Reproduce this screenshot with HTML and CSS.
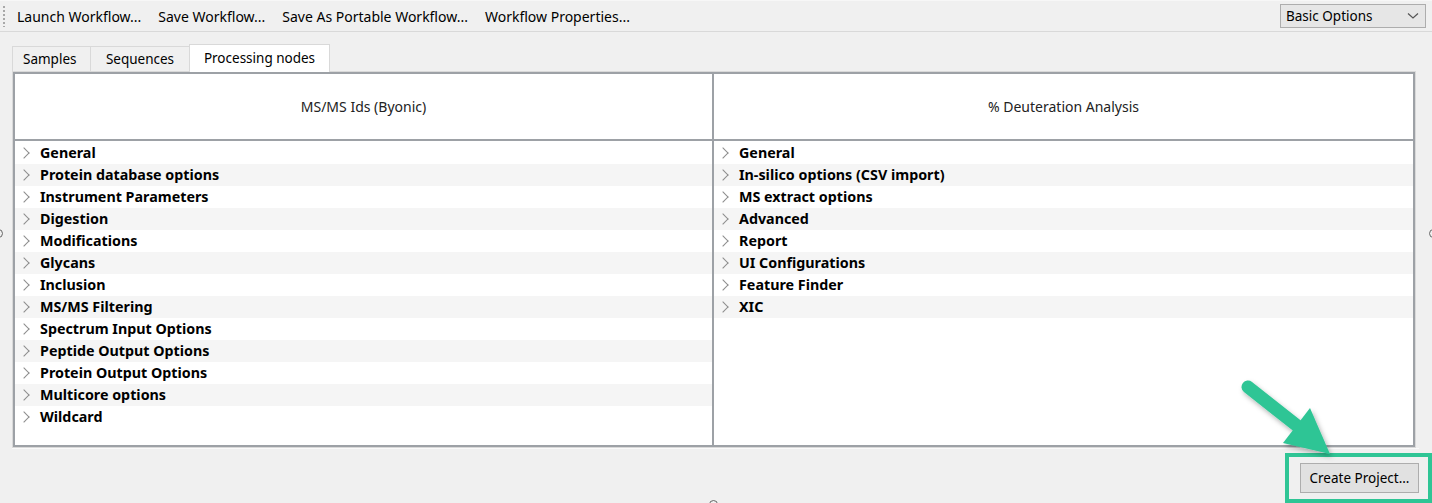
FILE: index.html
```html
<!DOCTYPE html>
<html lang="en">
<head>
  <meta charset="UTF-8" />
  <title>Workflow Editor</title>
  <link rel="stylesheet" href="styles.css">
</head>
<body>
  <div class="window">
    <div class="toolbar">
      <span class="grip"></span>
      <button class="tool">Launch Workflow...</button>
      <button class="tool">Save Workflow...</button>
      <button class="tool">Save As Portable Workflow...</button>
      <button class="tool">Workflow Properties...</button>
      <div class="combo">
        <span>Basic Options</span>
        <svg width="12" height="8" viewBox="0 0 12 8"><path d="M1 1.5 L6 6 L11 1.5" fill="none" stroke="#555" stroke-width="1.2"/></svg>
      </div>
    </div>

    <div class="content">
      <div class="tabs">
        <div class="tab">Samples</div>
        <div class="tab">Sequences</div>
        <div class="tab active">Processing nodes</div>
      </div>

      <div class="pane">
        <div class="grid">
          <div class="col">
            <div class="col-head">MS/MS Ids (Byonic)</div>
            <ul class="tree">
              <li>General</li>
              <li>Protein database options</li>
              <li>Instrument Parameters</li>
              <li>Digestion</li>
              <li>Modifications</li>
              <li>Glycans</li>
              <li>Inclusion</li>
              <li>MS/MS Filtering</li>
              <li>Spectrum Input Options</li>
              <li>Peptide Output Options</li>
              <li>Protein Output Options</li>
              <li>Multicore options</li>
              <li>Wildcard</li>
            </ul>
          </div>
          <div class="col">
            <div class="col-head">% Deuteration Analysis</div>
            <ul class="tree">
              <li>General</li>
              <li>In-silico options (CSV import)</li>
              <li>MS extract options</li>
              <li>Advanced</li>
              <li>Report</li>
              <li>UI Configurations</li>
              <li>Feature Finder</li>
              <li>XIC</li>
            </ul>
          </div>
        </div>
      </div>

      <div class="footer">
        <button class="push">Create Project...</button>
      </div>
    </div>

    <span class="handle handle-left"></span>
    <span class="handle handle-right"></span>
    <span class="handle handle-bottom"></span>

    <!-- callout over the button -->
    <div class="callout-box"></div>
    <svg class="callout-arrow" width="120" height="110" viewBox="0 0 120 110">
      <defs>
        <filter id="sh" x="-20%" y="-20%" width="150%" height="150%">
          <feDropShadow dx="2" dy="3" stdDeviation="2.5" flood-color="#000" flood-opacity="0.3"/>
        </filter>
      </defs>
      <g filter="url(#sh)">
        <line x1="10" y1="9" x2="62" y2="50" stroke="#2fc595" stroke-width="13" stroke-linecap="round"/>
        <polygon points="45,65 72,30 92,76" fill="#2fc595"/>
      </g>
    </svg>
  </div>
</body>
</html>
```

FILE: styles.css
```css
* {
  box-sizing: border-box;
}
body {
  margin: 0;
  background: #f0f0f0;
  font-family: 'Noto Sans', 'Open Sans', sans-serif;
  color: #000;
}

.window {
  position: relative;
  width: 1432px;
  height: 503px;
  overflow: hidden;
}

/* Панель инструментов */
.toolbar {
  height: 32px;
  display: flex;
  align-items: center;
  padding: 0 6px 0 3px;
  border-top: 1px solid #f7f7f7;
  border-bottom: 1px solid #d9d9d9;
}
.grip {
  width: 2px;
  height: 22px;
  margin-right: 5px;
  background-image: radial-gradient(circle, #a8a8a8 0.8px, transparent 1px);
  background-size: 2px 4px;
}
.tool {
  background: none;
  border: none;
  font: inherit;
  font-size: 14px;
  padding: 0 8px;
  color: #000;
  margin-right: 1px;
}
.tool:first-of-type {
  padding-left: 7px;
}
.combo {
  margin-left: auto;
  width: 146px;
  height: 24px;
  border: 1px solid #adadad;
  background: #e6e6e6;
  display: flex;
  align-items: center;
  justify-content: space-between;
  padding: 0 6px 0 5px;
  font-size: 13.5px;
}

.content {
  padding: 12px 16px 0 12px;
}

/* Вкладки */
.tabs {
  display: flex;
  height: 27px;
  align-items: flex-end;
}
.tab {
  height: 25px;
  padding: 0 10px;
  line-height: 25px;
  font-size: 13.5px;
  border: 1px solid #d9d9d9;
  border-bottom: none;
  background: #f0f0f0;
  margin-right: -1px;
}
.tab:first-child {
  width: 79px;
}
.tab:nth-child(2) {
  width: 100px;
  text-align: center;
}
.tab.active {
  height: 28px;
  line-height: 26px;
  background: #fff;
  width: 141px;
  text-align: center;
  margin-bottom: -1px;
  position: relative;
}

.pane {
  border: 1px solid #d9d9d9;
  background: #fff;
  height: 377px;
}
.grid {
  display: grid;
  grid-template-columns: 697px 1fr;
  height: 100%;
  border: 2px solid #9da1a6;
}
.col + .col {
  border-left: 2px solid #9da1a6;
}
.col-head {
  height: 67px;
  border-bottom: 2px solid #9da1a6;
  display: flex;
  align-items: center;
  justify-content: center;
  font-size: 14px;
  color: #222;
}

.tree {
  list-style: none;
  margin: 0;
  padding: 1px 0 0 0;
}
.tree li {
  height: 22px;
  line-height: 22px;
  padding-left: 25px;
  font-weight: 700;
  font-size: 14.3px;
  position: relative;
}
.tree li:nth-child(even) {
  background: #f5f5f5;
}
.tree li::before {
  content: "";
  position: absolute;
  left: 5px;
  top: 7px;
  width: 7px;
  height: 7px;
  border-right: 1.6px solid #8c8c8c;
  border-top: 1.6px solid #8c8c8c;
  transform: rotate(45deg);
}

.footer {
  display: flex;
  justify-content: flex-end;
  padding-top: 14px;
  margin-right: -3px;
  border-top: 1px solid #fafafa;
}
.push {
  width: 119px;
  height: 30px;
  background: #e1e1e1;
  border: 1px solid #adadad;
  font: inherit;
  font-size: 13.5px;
  color: #000;
  padding: 0;
}

.handle {
  position: absolute;
  width: 9px;
  height: 9px;
  border: 1.5px solid #666;
  border-radius: 50%;
}
.handle-left {
  left: -6px;
  top: 229px;
}
.handle-right {
  right: -6px;
  top: 229px;
}
.handle-bottom {
  left: 709px;
  bottom: -6px;
}

.callout-box {
  position: absolute;
  left: 1285px;
  top: 453px;
  width: 147px;
  height: 50px;
  border: 4px solid #2fc595;
}
.callout-arrow {
  position: absolute;
  left: 1238px;
  top: 378px;
}
```
